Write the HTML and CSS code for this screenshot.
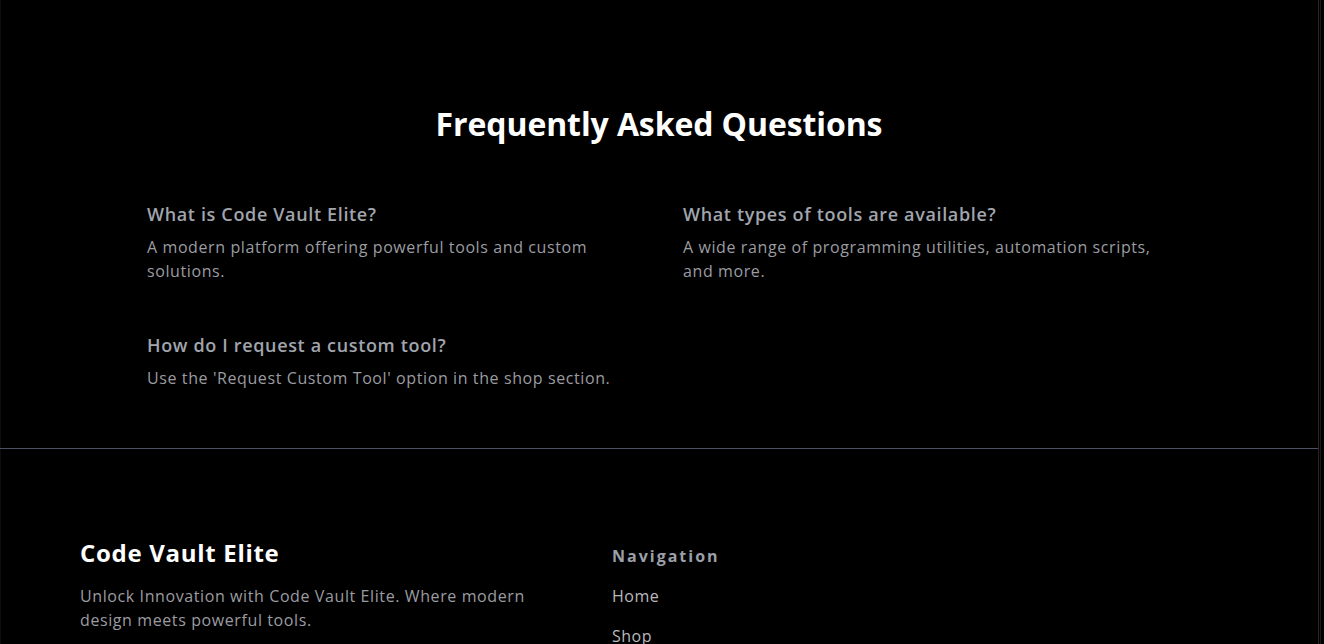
FILE: index.html
```html
<!DOCTYPE html>
<html lang="en">
<head>
<meta charset="utf-8">
<title>Code Vault Elite — FAQ</title>
<link rel="stylesheet" href="styles.css">
</head>
<body>
<div class="page">
  <div class="main">
    <section class="faq">
      <h2 class="faq-title">Frequently Asked Questions</h2>
      <div class="faq-grid">
        <div class="faq-item">
          <h3 class="faq-q">What is Code Vault Elite?</h3>
          <p class="faq-a">A modern platform offering powerful tools and custom solutions.</p>
        </div>
        <div class="faq-item">
          <h3 class="faq-q">What types of tools are available?</h3>
          <p class="faq-a">A wide range of programming utilities, automation scripts, and more.</p>
        </div>
        <div class="faq-item">
          <h3 class="faq-q">How do I request a custom tool?</h3>
          <p class="faq-a">Use the 'Request Custom Tool' option in the shop section.</p>
        </div>
      </div>
    </section>
    <footer class="footer">
      <div class="footer-grid">
        <div class="brand">
          <h2 class="brand-name">Code Vault Elite</h2>
          <p class="brand-text">Unlock Innovation with Code Vault Elite. Where modern design meets powerful tools.</p>
        </div>
        <nav class="nav-col">
          <h4 class="nav-title">Navigation</h4>
          <ul class="nav-list">
            <li><a class="nav-link" href="#">Home</a></li>
            <li><a class="nav-link" href="#">Shop</a></li>
            <li><a class="nav-link" href="#">FAQ</a></li>
          </ul>
        </nav>
      </div>
    </footer>
  </div>
  <div class="rail"><div class="rail-line"></div></div>
</div>
</body>
</html>
```

FILE: styles.css
```css
* { box-sizing: border-box; }
html, body { margin: 0; padding: 0; background: #000; }
body {
  font-family: "Open Sans", "DejaVu Sans", sans-serif;
  color: #fff;
  height: 644px;
  overflow: hidden;
}
.page {
  display: flex;
  min-height: 644px;
}
.main {
  flex: 1;
  box-shadow: inset 1px 0 0 #0d0d0d;
}
.rail {
  width: 6px;
  display: flex;
  border-left: 1px solid #262626;
}
.rail-line {
  width: 1px;
  margin-left: 1px;
  background: #1a1a1a;
}
.faq {
  padding: 104px 0 58px;
  border-bottom: 1px solid #4b5262;
}
.faq-title {
  margin: 0 0 56px;
  text-align: center;
  font-size: 32px;
  line-height: 40px;
  font-weight: 700;
  letter-spacing: -0.1px;
  color: #fff;
}
.faq-grid {
  max-width: 1024px;
  margin: 0 auto;
  display: grid;
  grid-template-columns: 1fr 1fr;
  gap: 48px;
}
.faq-q {
  margin: 0 0 7px;
  font-size: 18px;
  line-height: 28px;
  font-weight: 600;
  letter-spacing: 0.65px;
  color: #a1a5ad;
}
.faq-a {
  margin: 0;
  font-size: 16px;
  line-height: 24px;
  letter-spacing: 0.6px;
  color: #9b9ca1;
}
.footer {
  padding: 88px 80px 0;
}
.footer-grid {
  display: grid;
  grid-template-columns: 484px 1fr;
  gap: 48px;
}
.brand-name {
  margin: 0 0 15px;
  font-size: 24px;
  line-height: 32px;
  font-weight: 700;
  letter-spacing: 0.7px;
  color: #fff;
}
.brand-text {
  margin: 0;
  font-size: 16px;
  line-height: 24px;
  letter-spacing: 0.6px;
  color: #9b9ca1;
}
.nav-col { padding-top: 7px; }
.nav-title {
  margin: 0 0 16px;
  font-size: 16px;
  line-height: 24px;
  font-weight: 700;
  letter-spacing: 2px;
  color: #9ca0a8;
}
.nav-list {
  list-style: none;
  margin: 0;
  padding: 0;
  display: flex;
  flex-direction: column;
  gap: 16px;
}
.nav-link {
  font-size: 16px;
  line-height: 24px;
  letter-spacing: 0.5px;
  color: #b9b9bd;
  text-decoration: none;
}
```
